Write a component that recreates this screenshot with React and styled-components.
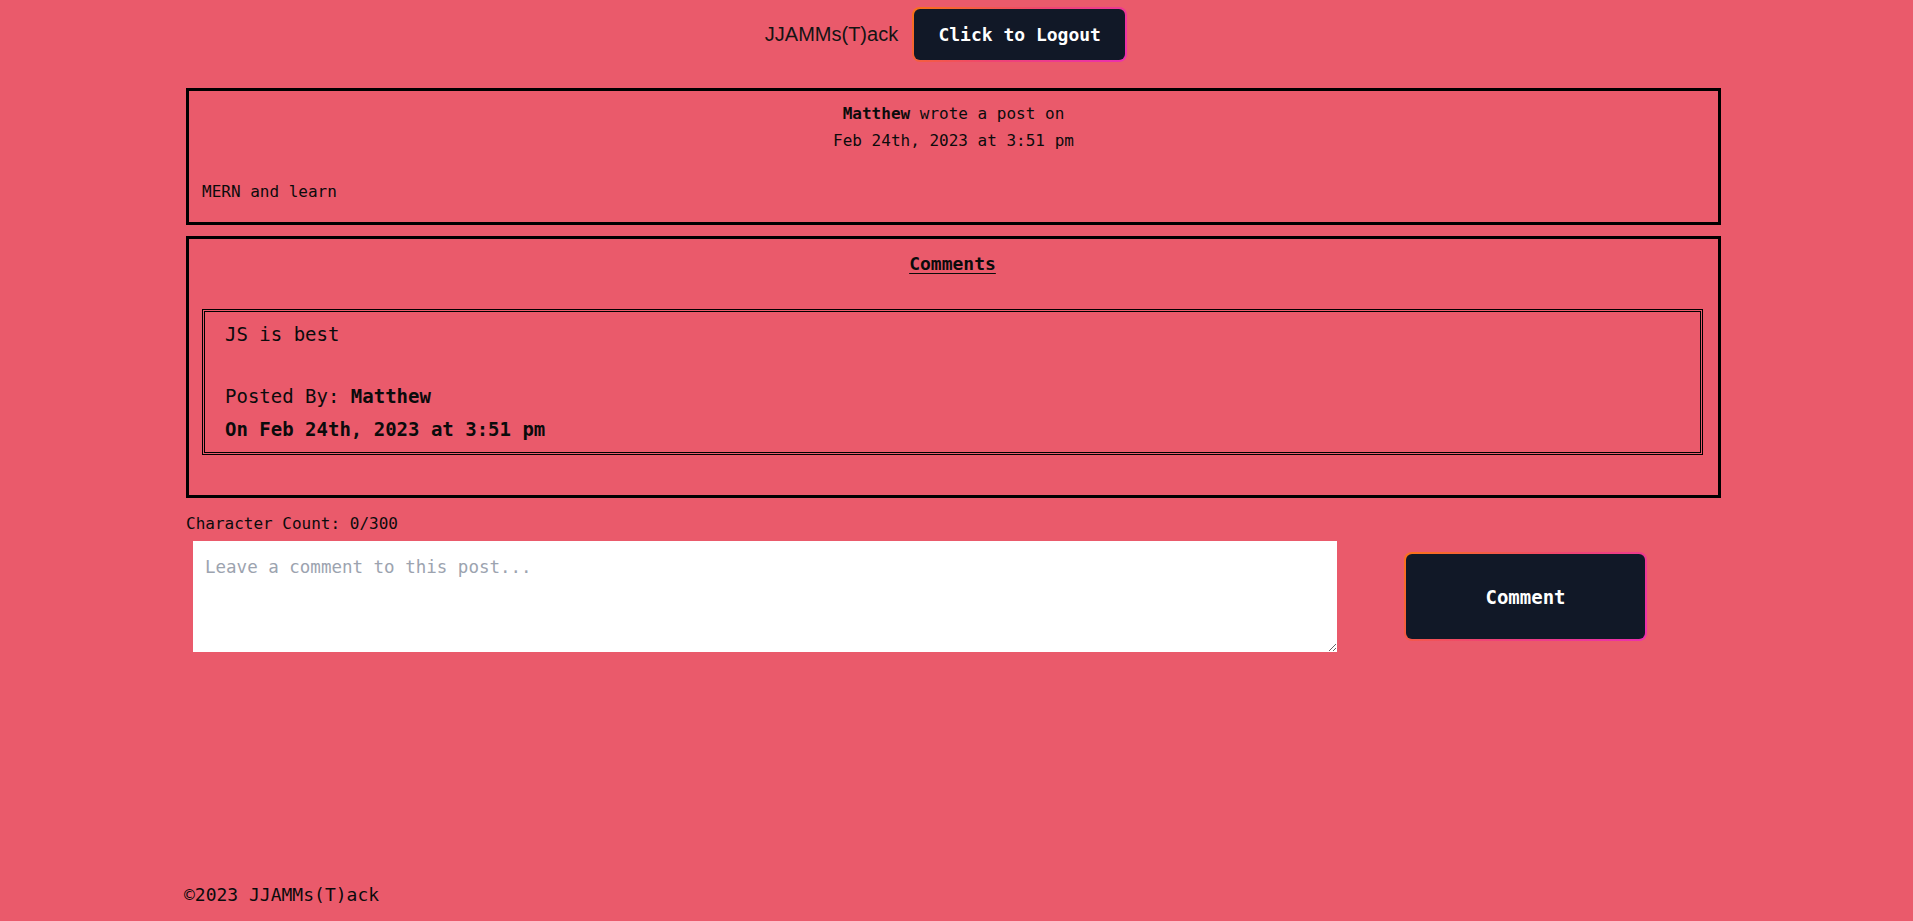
import styled, { createGlobalStyle } from "styled-components";
import { useState } from "react";

const GlobalStyle = createGlobalStyle`
    html, body {
        margin: 0;
        padding: 0;
        background-color: #ea5a6b;
        font-family: "DejaVu Sans Mono", "Liberation Mono", monospace;
        color: #0b0b0b;
    }
    * {
        box-sizing: border-box;
    }
`;

const Page = styled.div`
    min-height: 100vh;
    display: flex;
    flex-direction: column;
`;

const Header = styled.header`
    display: flex;
    justify-content: center;
    align-items: center;
    gap: 14px;
    padding: 7px 21px 0 0;
`;

const Title = styled.h1`
    margin: 0;
    font-family: "Liberation Sans", Arial, sans-serif;
    font-size: 20px;
    font-weight: 400;
    color: #141414;
`;

const GradientButton = styled.button`
    width: ${(p) => p.$w}px;
    height: ${(p) => p.$h}px;
    border: none;
    padding: 2px;
    border-radius: 8px;
    background: linear-gradient(135deg, #f97316 0%, #ef4473 50%, #ec2fb0 100%);
    cursor: pointer;
    & span {
        display: flex;
        align-items: center;
        justify-content: center;
        width: 100%;
        height: 100%;
        border-radius: 6px;
        background-color: #111827;
        color: #fff;
        font-family: "DejaVu Sans Mono", monospace;
        font-weight: 700;
        font-size: ${(p) => p.$size}px;
    }
`;

const Main = styled.main`
    width: 1535px;
    margin: 26px 0 0 186px;
    display: flex;
    flex-direction: column;
`;

const PostCard = styled.section`
    border: 3px solid #000;
    padding: 9px 13px 18px;
`;

const PostHead = styled.div`
    text-align: center;
    font-size: 16px;
    line-height: 27px;
    & b {
        font-weight: 700;
    }
`;

const PostBody = styled.p`
    margin: 26px 0 0;
    font-size: 16px;
    line-height: 24px;
`;

const CommentsCard = styled.section`
    margin-top: 11px;
    border: 3px solid #000;
    padding: 13px 15px 40px 13px;
`;

const CommentsTitle = styled.h2`
    margin: 0 0 33px;
    text-align: center;
    font-size: 18px;
    line-height: 24px;
    font-weight: 700;
    text-decoration: underline;
    text-underline-offset: 3px;
`;

const CommentItem = styled.div`
    border: 3px double #000;
    padding: 9px 20px 10px;
    font-size: 19px;
    line-height: 26px;
    & p {
        margin: 0;
    }
    & .byline {
        margin-top: 36px;
    }
    & .date {
        margin-top: 7px;
        font-weight: 700;
    }
`;

const CountLabel = styled.div`
    margin-top: 15px;
    font-size: 16px;
    line-height: 22px;
`;

const FormRow = styled.form`
    margin-top: 6px;
    display: flex;
    align-items: center;
`;

const TextArea = styled.textarea`
    margin-left: 7px;
    width: 1144px;
    height: 111px;
    border: none;
    outline: none;
    padding: 14px 12px;
    background: #fff;
    font-family: "DejaVu Sans Mono", monospace;
    font-size: 17.5px;
    line-height: 24px;
    color: #111;
    &::placeholder {
        color: #9ca3af;
    }
`;

const SubmitWrap = styled.div`
    margin-left: 67px;
`;

const Footer = styled.footer`
    margin-top: auto;
    padding: 0 0 14px 184px;
    font-size: 18px;
    line-height: 24px;
`;

const App = () => {
    const [text, setText] = useState("");

    return (
        <>
        <GlobalStyle />
        <Page>
            <Header>
                <Title>JJAMMs(T)ack</Title>
                <GradientButton $w={215} $h={55} $size={18}>
                    <span>Click to Logout</span>
                </GradientButton>
            </Header>
            <Main>
                <PostCard>
                    <PostHead>
                        <div><b>Matthew</b> wrote a post on</div>
                        <div>Feb 24th, 2023 at 3:51 pm</div>
                    </PostHead>
                    <PostBody>MERN and learn</PostBody>
                </PostCard>
                <CommentsCard>
                    <CommentsTitle>Comments</CommentsTitle>
                    <CommentItem>
                        <p>JS is best</p>
                        <p className="byline">Posted By: <b>Matthew</b></p>
                        <p className="date">On Feb 24th, 2023 at 3:51 pm</p>
                    </CommentItem>
                </CommentsCard>
                <CountLabel>Character Count: {text.length}/300</CountLabel>
                <FormRow onSubmit={(e) => e.preventDefault()}>
                    <TextArea
                        placeholder="Leave a comment to this post..."
                        value={text}
                        maxLength={300}
                        onChange={(e) => setText(e.target.value)}
                    />
                    <SubmitWrap>
                        <GradientButton type="submit" $w={243} $h={89} $size={19}>
                            <span>Comment</span>
                        </GradientButton>
                    </SubmitWrap>
                </FormRow>
            </Main>
            <Footer>©2023 JJAMMs(T)ack</Footer>
        </Page>
        </>
    );
};

export default App;
